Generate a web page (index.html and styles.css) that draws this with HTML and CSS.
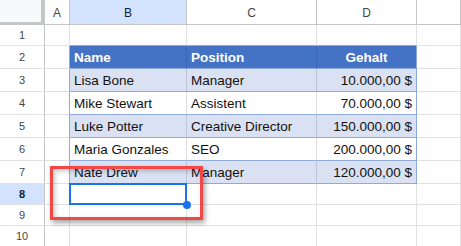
FILE: index.html
```html
<!DOCTYPE html>
<html>
<head>
  <link rel="stylesheet" href="styles.css">
</head>
<body>
  <div class="sheet">
    <div class="row col-head">
      <div class="cell corner"></div>
      <div class="cell hd">A</div>
      <div class="cell hd active">B</div>
      <div class="cell hd">C</div>
      <div class="cell hd">D</div>
      <div class="cell hd"></div>
    </div>

    <div class="row short">
      <div class="cell num">1</div>
      <div class="cell"></div>
      <div class="cell top-edge"></div>
      <div class="cell top-edge"></div>
      <div class="cell top-edge"></div>
      <div class="cell"></div>
    </div>

    <div class="row">
      <div class="cell num">2</div>
      <div class="cell left-edge"></div>
      <div class="cell th">Name</div>
      <div class="cell th">Position</div>
      <div class="cell th center">Gehalt</div>
      <div class="cell"></div>
    </div>

    <div class="row">
      <div class="cell num">3</div>
      <div class="cell left-edge"></div>
      <div class="cell td band">Lisa Bone</div>
      <div class="cell td band">Manager</div>
      <div class="cell td band right">10.000,00 $</div>
      <div class="cell"></div>
    </div>

    <div class="row">
      <div class="cell num">4</div>
      <div class="cell left-edge"></div>
      <div class="cell td">Mike Stewart</div>
      <div class="cell td">Assistent</div>
      <div class="cell td right">70.000,00 $</div>
      <div class="cell"></div>
    </div>

    <div class="row">
      <div class="cell num">5</div>
      <div class="cell left-edge"></div>
      <div class="cell td band">Luke Potter</div>
      <div class="cell td band">Creative Director</div>
      <div class="cell td band right">150.000,00 $</div>
      <div class="cell"></div>
    </div>

    <div class="row">
      <div class="cell num">6</div>
      <div class="cell left-edge"></div>
      <div class="cell td">Maria Gonzales</div>
      <div class="cell td">SEO</div>
      <div class="cell td right">200.000,00 $</div>
      <div class="cell"></div>
    </div>

    <div class="row">
      <div class="cell num">7</div>
      <div class="cell left-edge"></div>
      <div class="cell td band">Nate Drew</div>
      <div class="cell td band">Manager</div>
      <div class="cell td band right">120.000,00 $</div>
      <div class="cell"></div>
    </div>

    <div class="row short">
      <div class="cell num active">8</div>
      <div class="cell"></div>
      <div class="cell selected"><span class="handle"></span></div>
      <div class="cell"></div>
      <div class="cell"></div>
      <div class="cell"></div>
    </div>

    <div class="row short">
      <div class="cell num">9</div>
      <div class="cell"></div>
      <div class="cell"></div>
      <div class="cell"></div>
      <div class="cell"></div>
      <div class="cell"></div>
    </div>

    <div class="row short">
      <div class="cell num">10</div>
      <div class="cell"></div>
      <div class="cell"></div>
      <div class="cell"></div>
      <div class="cell"></div>
      <div class="cell"></div>
    </div>

    <!-- highlight frame drawn over the grid -->
    <div class="callout"></div>
  </div>
</body>
</html>
```

FILE: styles.css
```css
body {
  margin: 0;
  background: #fff;
  font-family: "Liberation Sans", Arial, sans-serif;
  overflow: hidden;
}

.sheet {
  position: relative;
  width: 461px;
  height: 246px;
  overflow: hidden;
}

.row {
  display: grid;
  grid-template-columns: 45px 25px 117px 130px 100px 1fr;
  height: 23px;
}

.row.short {
  height: 21px;
}

.row.col-head {
  height: 25px;
}

.cell {
  box-sizing: border-box;
  border-right: 1px solid #e1e1e1;
  border-bottom: 1px solid #e1e1e1;
  display: flex;
  align-items: flex-end;
  min-width: 0;
  white-space: nowrap;
}

/* column and row headers */
.hd {
  border-color: #c4c7c5;
  align-items: center;
  justify-content: center;
  font-size: 12px;
  color: #444746;
  padding-top: 1px;
}

.corner {
  background: #f8f9fa;
  border-right: 4px solid #c4c7c5;
  border-bottom: 3px solid #c4c7c5;
}

.num {
  border-right-color: #c4c7c5;
  align-items: center;
  justify-content: center;
  font-size: 11px;
  color: #444746;
}

.hd.active,
.num.active {
  background: #d3e3fd;
  color: #041e49;
  font-weight: bold;
}

.hd.active {
  font-weight: normal;
}

/* formatted table */
.top-edge {
  border-bottom-color: #8eaadb;
}

.left-edge {
  border-right-color: #8eaadb;
}

.th,
.td {
  font-size: 13.5px;
  padding: 0 4px 3px 4px;
  border-bottom-color: #8eaadb;
}

.th {
  background: #4472c4;
  color: #fff;
  font-weight: bold;
  border-right-color: #3d66b0;
}

.td {
  color: #111;
  border-right-color: #dcdcdc;
}

.td.band {
  background: #d9e1f2;
  border-right-color: #b9c3d9;
}

.right {
  justify-content: flex-end;
}

.center {
  justify-content: center;
}

.row .cell:nth-child(5).th,
.row .cell:nth-child(5).td {
  border-right-color: #8eaadb;
}

/* active cell */
.selected {
  position: relative;
}

.selected::after {
  content: '';
  position: absolute;
  left: -1px;
  top: -1px;
  right: -1px;
  bottom: -1px;
  border: 2px solid #1a73e8;
}

.handle {
  position: absolute;
  right: -5px;
  bottom: -5px;
  width: 8px;
  height: 8px;
  border-radius: 50%;
  background: #1a73e8;
  z-index: 2;
}

.callout {
  position: absolute;
  left: 50px;
  top: 166px;
  width: 153px;
  height: 54px;
  box-sizing: border-box;
  border: 3px solid #f24747;
  box-shadow: 2px 3px 5px rgba(0, 0, 0, 0.35), inset 2px 2px 5px rgba(0, 0, 0, 0.22);
}
```
